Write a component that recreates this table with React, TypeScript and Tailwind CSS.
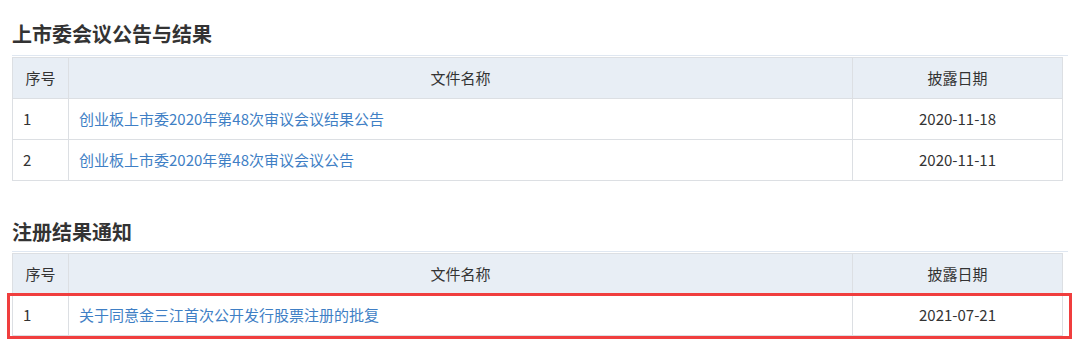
import React from 'react';

interface Row {
  no: number;
  title: string;
  date: string;
}

const meetings: Row[] = [
  { no: 1, title: '创业板上市委2020年第48次审议会议结果公告', date: '2020-11-18' },
  { no: 2, title: '创业板上市委2020年第48次审议会议公告', date: '2020-11-11' },
];

const registrations: Row[] = [
  { no: 1, title: '关于同意金三江首次公开发行股票注册的批复', date: '2021-07-21' },
];

function SectionTitle({ children, className }: { children: React.ReactNode; className?: string }) {
  return (
    <div className={`border-b border-[#dfe7f1] text-[20px] leading-[28px] font-bold text-[#333] ${className ?? ''}`}>
      {children}
    </div>
  );
}

function DocTable({ rows, highlight }: { rows: Row[]; highlight?: boolean }) {
  return (
    <div className="relative mt-px">
      <table className="w-[1051px] table-fixed border-collapse text-[15px] text-[#333]">
        <colgroup>
          <col className="w-[56px]" />
          <col className="w-[784px]" />
          <col />
        </colgroup>
        <thead>
          <tr className="h-[41px] bg-[#e8eef5]">
            <th className="border border-[#dcdfe3] font-normal">序号</th>
            <th className="border border-[#dcdfe3] font-normal">文件名称</th>
            <th className="border border-[#dcdfe3] font-normal">披露日期</th>
          </tr>
        </thead>
        <tbody>
          {rows.map((row) => (
            <tr key={row.no} className="h-[41px]">
              <td className="border border-[#dcdfe3] pl-[10px]">{row.no}</td>
              <td className="border border-[#dcdfe3] pl-[10px]">
                <a href="#" className="text-[#3f7fc5]">{row.title}</a>
              </td>
              <td className="border border-[#dcdfe3] text-center">{row.date}</td>
            </tr>
          ))}
        </tbody>
      </table>
      {highlight && (
        <div className="pointer-events-none absolute left-[-5px] right-[-4px] top-[40px] h-[46px] border-[3px] border-[#f03e3e]" />
      )}
    </div>
  );
}

export default function App() {
  return (
    <div
      className="h-[359px] w-[1080px] bg-white px-[12px] pt-[20px]"
      style={{ fontFamily: '"Noto Sans CJK SC", "Microsoft YaHei", sans-serif' }}
    >
      <SectionTitle className="pb-[7px]">上市委会议公告与结果</SectionTitle>
      <DocTable rows={meetings} />
      <SectionTitle className="mt-[37px] pb-[5px]">注册结果通知</SectionTitle>
      <DocTable rows={registrations} highlight />
    </div>
  );
}
